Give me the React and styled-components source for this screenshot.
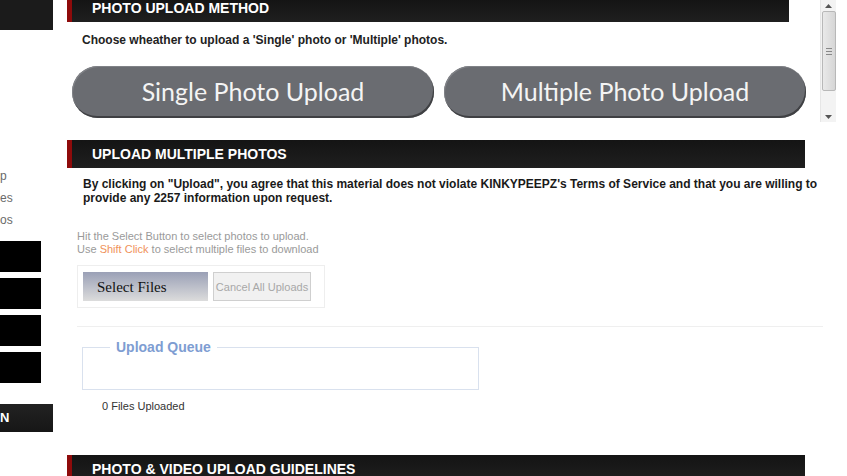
import styled, { createGlobalStyle } from 'styled-components'

const GlobalStyle = createGlobalStyle`
  html, body {
    margin: 0;
    padding: 0;
    background: #fff;
    width: 847px;
    height: 476px;
    overflow: hidden;
  }
  body {
    font-family: "Liberation Sans", Arial, sans-serif;
  }
`

const Page = styled.div`
  display: flex;
  gap: 14px;
  width: 847px;
  height: 476px;
  overflow: hidden;
`

const Sidebar = styled.aside`
  width: 53px;
  flex: none;
  display: flex;
  flex-direction: column;
`

const SideTop = styled.div`
  height: 30px;
  background: #1b1b1b;
`

const SideLinks = styled.ul`
  list-style: none;
  margin: 139px 0 0;
  padding: 0;
  display: flex;
  flex-direction: column;
  gap: 8px;
  li {
    font-size: 12px;
    line-height: 14px;
    color: #6a6a6a;
  }
`

const SideBlocks = styled.div`
  margin-top: 14px;
  display: flex;
  flex-direction: column;
  gap: 6px;
`

const SideBlock = styled.div`
  width: 41px;
  height: 31px;
  background: #000;
`

const SideButton = styled.div`
  margin-top: 21px;
  height: 28px;
  background: linear-gradient(#222, #161616);
  color: #fff;
  font-weight: bold;
  font-size: 13px;
  line-height: 28px;
`

const Main = styled.main`
  flex: 1;
  display: flex;
  flex-direction: column;
`

const TopPane = styled.div`
  height: 123px;
  display: flex;
  gap: 14px;
  flex: none;
`

const TopContent = styled.div`
  width: 739px;
  display: flex;
  flex-direction: column;
`

const Header = styled.h2`
  margin: 0;
  width: ${p => p.$w}px;
  height: ${p => p.$h}px;
  box-sizing: border-box;
  border-left: 5px solid #8e0b0b;
  background: linear-gradient(#141414, #1f1f1f);
  color: #fff;
  font-size: 14px;
  font-weight: bold;
  line-height: ${p => p.$h - (p.$top ? 6 : 0)}px;
  padding-left: 20px;
  text-transform: uppercase;
  flex: none;
`

const Intro = styled.p`
  margin: 11px 0 0 15px;
  font-size: 12px;
  font-weight: bold;
  line-height: 14px;
  color: #222;
`

const MethodRow = styled.div`
  margin-top: 19px;
  margin-left: 5px;
  display: flex;
  gap: 10px;
`

const MethodButton = styled.button`
  width: 362px;
  height: 52px;
  border: none;
  border-radius: 26px;
  background: #6a6c71;
  box-shadow: inset -1px -2px 0 #3f4043, inset 1px 1px 0 #808287;
  color: #f4f4f4;
  font-family: Lato, "Open Sans", sans-serif;
  font-size: 25px;
  padding: 0 0 2px;
  cursor: pointer;
`

const Scrollbar = styled.div`
  width: 16px;
  height: 122px;
  background: #f3f3f3;
  border-left: 1px solid #e6e6e6;
  display: flex;
  flex-direction: column;
  align-items: center;
  box-sizing: border-box;
`

const Arrow = styled.div`
  height: 11px;
  width: 100%;
  display: flex;
  align-items: center;
  justify-content: center;
`

const Thumb = styled.div`
  width: 14px;
  height: 80px;
  box-sizing: border-box;
  border: 1px solid #b8b8b8;
  border-radius: 2px;
  background: linear-gradient(90deg, #e9e9e9, #d6d6d6);
  display: flex;
  flex-direction: column;
  align-items: center;
  justify-content: center;
  gap: 2px;
  span {
    width: 6px;
    height: 1px;
    background: #888;
  }
`

const Track = styled.div`
  flex: 1;
`

const Section = styled.section`
  margin-top: ${p => p.$mt}px;
  display: flex;
  flex-direction: column;
`

const Terms = styled.p`
  margin: 9px 0 0 16px;
  width: 740px;
  font-size: 12px;
  font-weight: bold;
  line-height: 14px;
  color: #1a1a1a;
`

const Help = styled.p`
  margin: 25px 0 0 10px;
  font-size: 11px;
  line-height: 13px;
  color: #9a9a9a;
  span {
    color: #f0925a;
  }
`

const UploadBox = styled.div`
  margin: 9px 0 0 10px;
  width: 248px;
  height: 43px;
  box-sizing: border-box;
  border: 1px solid #eeeeee;
  padding: 6px 5px;
  display: flex;
  gap: 5px;
`

const SelectButton = styled.button`
  width: 125px;
  height: 29px;
  border: none;
  background: linear-gradient(#9aa0b6, #dcdcdc);
  font-family: "Liberation Serif", "Times New Roman", serif;
  font-size: 15px;
  color: #111;
  text-align: left;
  padding: 2px 0 0 14px;
`

const CancelButton = styled.button`
  width: 98px;
  height: 29px;
  border: 1px solid #cfcfcf;
  background: #f1f1f1;
  font-family: "Liberation Sans", Arial, sans-serif;
  font-size: 11px;
  color: #a8a8a8;
  padding: 0;
`

const Rule = styled.hr`
  margin: 18px 0 0 10px;
  width: 746px;
  border: none;
  border-top: 1px solid #efefef;
`

const Queue = styled.fieldset`
  margin: 12px 0 0 15px;
  width: 397px;
  height: 51px;
  box-sizing: border-box;
  border: 1px solid #d9e1ee;
  padding: 0;
  legend {
    margin-left: 27px;
    padding: 0 6px;
    font-size: 14px;
    font-weight: bold;
    color: #7e9dd2;
  }
`

const Count = styled.div`
  margin: 10px 0 0 35px;
  font-size: 11px;
  line-height: 13px;
  color: #333;
`

export default function App() {
  return (
    <>
      <GlobalStyle />
      <Page>
        <Sidebar>
          <SideTop />
          <SideLinks>
            <li>p</li>
            <li>es</li>
            <li>os</li>
          </SideLinks>
          <SideBlocks>
            <SideBlock />
            <SideBlock />
            <SideBlock />
            <SideBlock />
          </SideBlocks>
          <SideButton>N</SideButton>
        </Sidebar>
        <Main>
          <TopPane>
            <TopContent>
              <Header $w={722} $h={22} $top>Photo Upload Method</Header>
              <Intro>Choose wheather to upload a 'Single' photo or 'Multiple' photos.</Intro>
              <MethodRow>
                <MethodButton>Single Photo Upload</MethodButton>
                <MethodButton>Multiple Photo Upload</MethodButton>
              </MethodRow>
            </TopContent>
            <Scrollbar>
              <Arrow>
                <svg width="7" height="4" viewBox="0 0 7 4"><path d="M0 4 L3.5 0 L7 4 Z" fill="#555" /></svg>
              </Arrow>
              <Thumb><span /><span /><span /></Thumb>
              <Track />
              <Arrow>
                <svg width="7" height="4" viewBox="0 0 7 4"><path d="M0 0 L3.5 4 L7 0 Z" fill="#555" /></svg>
              </Arrow>
            </Scrollbar>
          </TopPane>
          <Section $mt={17}>
            <Header $w={738} $h={28}>Upload Multiple Photos</Header>
            <Terms>
              By clicking on "Upload", you agree that this material does not violate KINKYPEEPZ's Terms of Service and that you are willing to provide any 2257 information upon request.
            </Terms>
            <Help>
              Hit the Select Button to select photos to upload.<br />
              Use <span>Shift Click</span> to select multiple files to download
            </Help>
            <UploadBox>
              <SelectButton>Select Files</SelectButton>
              <CancelButton>Cancel All Uploads</CancelButton>
            </UploadBox>
            <Rule />
            <Queue>
              <legend>Upload Queue</legend>
            </Queue>
            <Count>0 Files Uploaded</Count>
          </Section>
          <Section $mt={42}>
            <Header $w={738} $h={28}>Photo &amp; Video Upload Guidelines</Header>
          </Section>
        </Main>
      </Page>
    </>
  )
}
